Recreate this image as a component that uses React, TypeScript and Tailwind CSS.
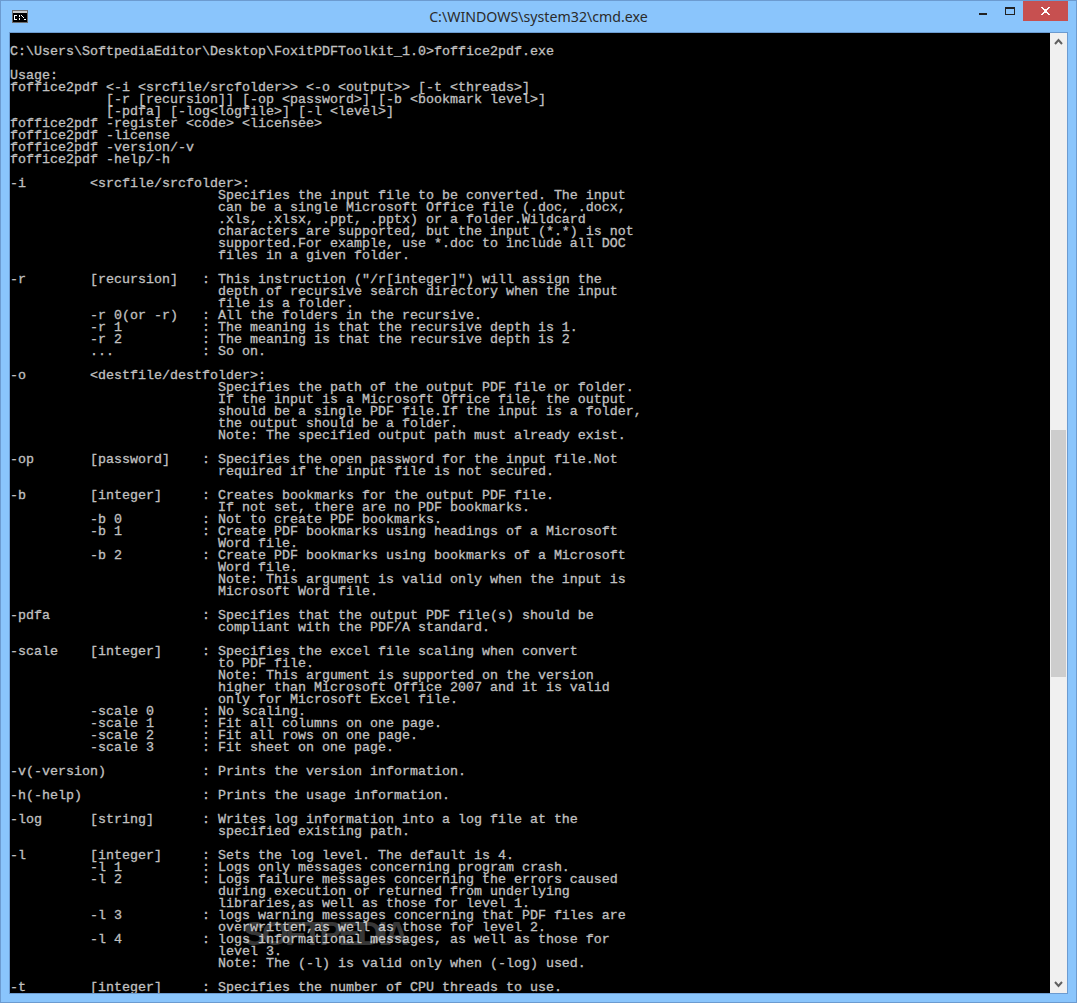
const lines = String.raw`
C:\Users\SoftpediaEditor\Desktop\FoxitPDFToolkit_1.0>foffice2pdf.exe

Usage:
foffice2pdf <-i <srcfile/srcfolder>> <-o <output>> [-t <threads>]
            [-r [recursion]] [-op <password>] [-b <bookmark level>]
            [-pdfa] [-log<logfile>] [-l <level>]
foffice2pdf -register <code> <licensee>
foffice2pdf -license
foffice2pdf -version/-v
foffice2pdf -help/-h

-i        <srcfile/srcfolder>:
                          Specifies the input file to be converted. The input
                          can be a single Microsoft Office file (.doc, .docx,
                          .xls, .xlsx, .ppt, .pptx) or a folder.Wildcard
                          characters are supported, but the input (*.*) is not
                          supported.For example, use *.doc to include all DOC
                          files in a given folder.

-r        [recursion]   : This instruction ("/r[integer]") will assign the
                          depth of recursive search directory when the input
                          file is a folder.
          -r 0(or -r)   : All the folders in the recursive.
          -r 1          : The meaning is that the recursive depth is 1.
          -r 2          : The meaning is that the recursive depth is 2
          ...           : So on.

-o        <destfile/destfolder>:
                          Specifies the path of the output PDF file or folder.
                          If the input is a Microsoft Office file, the output
                          should be a single PDF file.If the input is a folder,
                          the output should be a folder.
                          Note: The specified output path must already exist.

-op       [password]    : Specifies the open password for the input file.Not
                          required if the input file is not secured.

-b        [integer]     : Creates bookmarks for the output PDF file.
                          If not set, there are no PDF bookmarks.
          -b 0          : Not to create PDF bookmarks.
          -b 1          : Create PDF bookmarks using headings of a Microsoft
                          Word file.
          -b 2          : Create PDF bookmarks using bookmarks of a Microsoft
                          Word file.
                          Note: This argument is valid only when the input is
                          Microsoft Word file.

-pdfa                   : Specifies that the output PDF file(s) should be
                          compliant with the PDF/A standard.

-scale    [integer]     : Specifies the excel file scaling when convert
                          to PDF file.
                          Note: This argument is supported on the version
                          higher than Microsoft Office 2007 and it is valid
                          only for Microsoft Excel file.
          -scale 0      : No scaling.
          -scale 1      : Fit all columns on one page.
          -scale 2      : Fit all rows on one page.
          -scale 3      : Fit sheet on one page.

-v(-version)            : Prints the version information.

-h(-help)               : Prints the usage information.

-log      [string]      : Writes log information into a log file at the
                          specified existing path.

-l        [integer]     : Sets the log level. The default is 4.
          -l 1          : Logs only messages concerning program crash.
          -l 2          : Logs failure messages concerning the errors caused
                          during execution or returned from underlying
                          libraries,as well as those for level 1.
          -l 3          : logs warning messages concerning that PDF files are
                          overwritten,as well as those for level 2.
          -l 4          : logs informational messages, as well as those for
                          level 3.
                          Note: The (-l) is valid only when (-log) used.

-t        [integer]     : Specifies the number of CPU threads to use.`.split("\n");

export default function App() {
  return (
    <div className="flex h-[1003px] w-[1077px] flex-col overflow-hidden border border-[#6c9bd0] bg-[#8ac5fc] font-['Noto_Sans',sans-serif]">
      <div className="grid h-[31px] shrink-0 grid-cols-[1fr_auto_1fr] items-start">
        <div className="pl-[11px] pt-[9px]">
          <svg width="16" height="13" viewBox="0 0 16 13" className="block" shapeRendering="crispEdges">
            <rect x="0" y="0" width="16" height="13" fill="#6b6b6b" />
            <rect x="1" y="1" width="14" height="2" fill="#c9c9c9" />
            <rect x="1" y="3" width="14" height="9" fill="#000" />
            <path d="M2 5h3v1H2zM2 6h1v3H2zM2 9h3v1H2zM7 5h1v2H7zM7 8h1v2H7zM9 5h1v1H9zM10 6h1v1h-1zM11 7h1v1h-1zM12 9h2v1h-2z" fill="#fff" />
          </svg>
        </div>
        <div className="whitespace-nowrap pt-[6px] text-[14.2px] leading-[20px] text-[#2b2b2b]">C:\WINDOWS\system32\cmd.exe</div>
        <div className="flex items-start justify-end">
          <div className="mr-[18px] mt-[12px] h-[2px] w-[8px] bg-[#222]" />
          <div className="mr-[8px] mt-[6px] h-[8px] w-[10px] border border-t-2 border-[#222]" />
          <div className="mr-[8px] flex h-[20px] w-[45px] items-center justify-center bg-[#c75050]">
            <svg width="9" height="8" viewBox="0 0 9 8" shapeRendering="crispEdges" fill="#fff">
              <path d="M0 0h2v1h1v1h3V1h1V0h2v1H8v1H7v1H6v2h1v1h1v1h1v1H7V7H6V6H3v1H2v1H0V7h1V6h1V5h1V3H2V2H1V1H0z" />
            </svg>
          </div>
        </div>
      </div>
      <div className="mx-[8px] flex h-[962px] shrink-0 border border-[#6c9bd0]">
        <div className="relative w-[1040px] shrink-0 overflow-hidden bg-black font-['Liberation_Mono',monospace] text-[13.33px] text-[#c0c0c0] [-webkit-text-stroke:0.3px_#c0c0c0]">
          {lines.map((l, i) => (
            <div key={i} className="h-[12px] whitespace-pre leading-[14px]">{l || " "}</div>
          ))}
          <div className="absolute left-[233px] top-[880px] font-['Liberation_Sans',sans-serif] text-[34px] leading-[40px] font-bold tracking-[-3.6px] text-[#ffffff3a] [-webkit-text-stroke:0]">SOFTPEDIA</div>
        </div>
        <div className="flex w-[17px] shrink-0 flex-col bg-[#f0f0f0]">
          <div className="flex h-[17px] shrink-0 items-center justify-center">
            <svg width="9" height="7" viewBox="0 0 9 7" fill="none" stroke="#606060" strokeWidth="2"><path d="M1 6l3.5-4L8 6" /></svg>
          </div>
          <div className="ml-[1px] mt-[380px] h-[247px] w-[15px] bg-[#cdcdcd]" />
          <div className="flex-1" />
          <div className="flex h-[17px] shrink-0 items-center justify-center">
            <svg width="9" height="7" viewBox="0 0 9 7" fill="none" stroke="#606060" strokeWidth="2"><path d="M1 1l3.5 4L8 1" /></svg>
          </div>
        </div>
      </div>
    </div>
  );
}
